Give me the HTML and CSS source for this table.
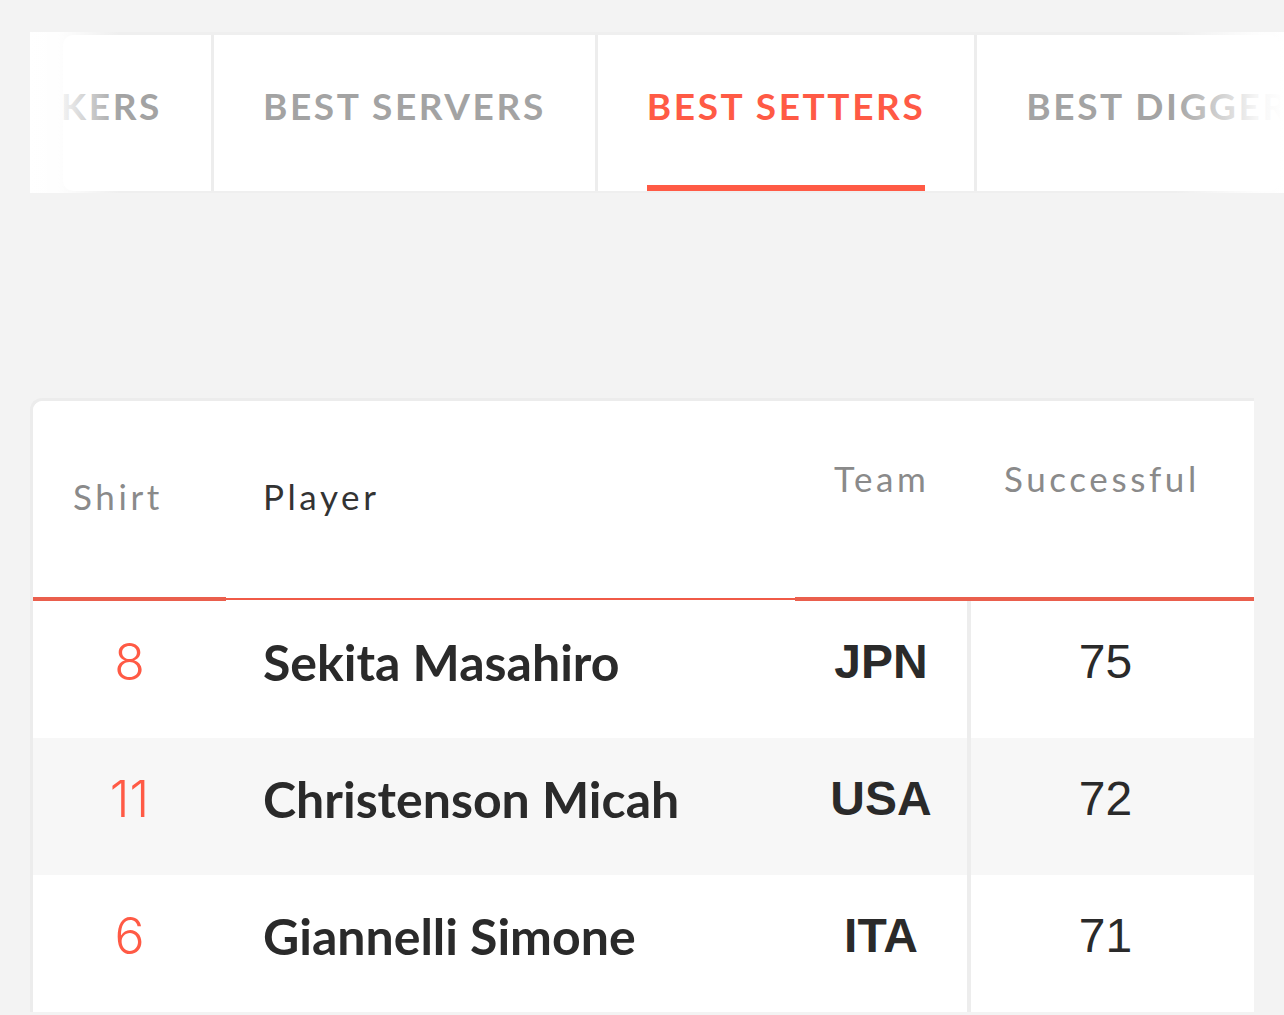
FILE: index.html
```
<!DOCTYPE html>
<html lang="en">
<head>
<meta charset="utf-8">
<title>Best Setters</title>
<link rel="stylesheet" href="styles.css">
</head>
<body>
<div class="page">
  <nav class="tabs-wrap">
    <div class="tabs-viewport">
      <a class="tab tab-first">BEST ATTACKERS</a>
      <a class="tab">BEST SERVERS</a>
      <a class="tab active"><span class="tab-label">BEST SETTERS</span></a>
      <a class="tab">BEST DIGGERS</a>
      <a class="tab">BEST RECEIVERS</a>
    </div>
    <span class="fade fade-left"></span>
    <span class="fade fade-right"></span>
  </nav>

  <div class="card">
    <table class="stats">
      <thead>
        <tr>
          <th class="c-shirt">Shirt</th>
          <th class="c-player">Player</th>
          <th class="c-team">Team</th>
          <th class="c-succ">Successful</th>
        </tr>
      </thead>
      <tbody>
        <tr>
          <td class="c-shirt">8</td>
          <td class="c-player">Sekita Masahiro</td>
          <td class="c-team">JPN</td>
          <td class="c-succ">75</td>
        </tr>
        <tr class="alt">
          <td class="c-shirt">11</td>
          <td class="c-player">Christenson Micah</td>
          <td class="c-team">USA</td>
          <td class="c-succ">72</td>
        </tr>
        <tr>
          <td class="c-shirt">6</td>
          <td class="c-player">Giannelli Simone</td>
          <td class="c-team">ITA</td>
          <td class="c-succ">71</td>
        </tr>
      </tbody>
    </table>
  </div>
</div>
</body>
</html>
```
FILE: styles.css
```
html, body {
  margin: 0;
  padding: 0;
  background: #f3f3f3;
}
body {
  font-family: "Lato", "Inter", sans-serif;
  color: #2a2a2a;
  overflow: hidden;
}
.page {
  padding-top: 32px;
}

/* ---------- tabs ---------- */
.tabs-wrap {
  position: relative;
  margin-left: 30px;
  height: 161px;
  box-sizing: border-box;
  padding: 3px 4px 2px 33px;
  background: #efefef;
  display: flex;
}
.tabs-viewport {
  flex: 1;
  display: flex;
  gap: 3px;
  overflow: hidden;
  border-radius: 10px;
  background: #ededed;
}
.tab {
  flex: none;
  display: flex;
  align-items: center;
  justify-content: center;
  box-sizing: border-box;
  height: 100%;
  padding: 0 49px 16px;
  background: #fff;
  color: #a3a3a3;
  font-weight: 700;
  font-size: 37px;
  letter-spacing: 2.6px;
  white-space: nowrap;
  text-decoration: none;
}
.tab-first {
  width: 148px;
  justify-content: flex-end;
  padding-right: 49px;
  overflow: hidden;
}
.tab.active {
  color: #ff5a45;
  padding-bottom: 0;
  align-items: stretch;
}
.tab-label {
  display: flex;
  align-items: center;
  padding-bottom: 10px;
  border-bottom: 6px solid #ff5a45;
}
.fade {
  position: absolute;
  top: 0;
  bottom: 0;
  width: 90px;
  pointer-events: none;
}
.fade-left {
  left: 0;
  background: linear-gradient(to right, #fff 0%, rgba(255,255,255,0.95) 30%, rgba(255,255,255,0) 100%);
}
.fade-right {
  right: 0;
  width: 110px;
  background: linear-gradient(to left, #fff 0%, rgba(255,255,255,0.9) 25%, rgba(255,255,255,0) 100%);
}

/* ---------- table ---------- */
.card {
  margin: 205px 0 0 30px;
  width: 1224px;
  box-sizing: border-box;
  border-top: 3px solid #ececec;
  border-left: 3px solid #ececec;
  border-top-left-radius: 12px;
  background: #fff;
}
.stats {
  border-collapse: separate;
  border-spacing: 0;
  width: 1221px;
  table-layout: fixed;
}
.stats th {
  height: 196px;
  box-sizing: content-box;
  padding: 0 0 6px;
  font-weight: 400;
  font-size: 35px;
  letter-spacing: 3.6px;
  color: #8a8a8a;
  text-align: left;
  vertical-align: middle;
  border-bottom: 4px solid #ea5f4d;
  background: #fff;
}
.stats th.c-shirt {
  width: 153px;
  padding-left: 40px;
  height: 190px;
  border-top-left-radius: 10px;
}
.stats th.c-player {
  width: 532px;
  padding-left: 37px;
  height: 190px;
  color: #333;
  border-bottom: 4px solid transparent;
  background: #fff linear-gradient(#f05a47, #f05a47) no-repeat;
  background-origin: border-box;
  background-clip: border-box;
  background-size: 100% 2px;
  background-position: 0 calc(100% - 1px);
}
.stats th.c-team {
  width: 137px;
  padding-left: 39px;
  padding-bottom: 42px;
  height: 154px;
}
.stats th.c-succ {
  width: 250px;
  padding-left: 33px;
  padding-bottom: 42px;
  height: 154px;
}

.stats td {
  height: 121px;
  padding: 0 0 16px;
  font-size: 50px;
  vertical-align: middle;
  background: #fff;
}
.stats tr.alt td {
  background: #f7f7f7;
}
.stats td.c-shirt {
  text-align: center;
  color: #ff5a45;
  font-family: "Inter", "Lato", sans-serif;
  font-weight: 300;
  font-size: 50px;
}
.stats td.c-player {
  padding-left: 37px;
  font-weight: 700;
  color: #2a2a2a;
}
.stats td.c-team {
  text-align: center;
  font-family: "Liberation Sans", Arial, sans-serif;
  font-weight: 700;
  font-size: 48px;
  color: #2a2a2a;
  border-right: 4px solid #ededed;
}
.stats td.c-succ {
  text-align: center;
  padding-right: 14px;
  font-family: "Liberation Sans", Arial, sans-serif;
  font-weight: 400;
  font-size: 48px;
  color: #2a2a2a;
}
```
